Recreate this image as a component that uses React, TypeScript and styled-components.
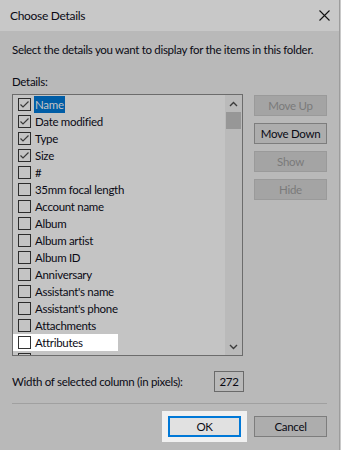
import React from 'react'
import styled, { createGlobalStyle } from 'styled-components'

const FONT = '"Segoe UI", Lato, "Liberation Sans", sans-serif'
const FONT_SIZE = '11.5px'
const TRACKING = '-0.3px'
const ROW_HEIGHT = 17

const GlobalStyle = createGlobalStyle`
  html, body {
    margin: 0;
    padding: 0;
    background: #c9c9c9;
  }
  body {
    font-family: ${FONT};
    font-size: ${FONT_SIZE};
    letter-spacing: ${TRACKING};
    color: #0a0a14;
    white-space: nowrap;
  }
`

const columns: Array<{ name: string, checked: boolean }> = [
  { name: 'Name', checked: true },
  { name: 'Date modified', checked: true },
  { name: 'Type', checked: true },
  { name: 'Size', checked: true },
  { name: '#', checked: false },
  { name: '35mm focal length', checked: false },
  { name: 'Account name', checked: false },
  { name: 'Album', checked: false },
  { name: 'Album artist', checked: false },
  { name: 'Album ID', checked: false },
  { name: 'Anniversary', checked: false },
  { name: "Assistant's name", checked: false },
  { name: "Assistant's phone", checked: false },
  { name: 'Attachments', checked: false },
  { name: 'Attributes', checked: false },
  { name: 'Audio format', checked: false }
]

const SELECTED = 'Name'
const SPOTLIGHT = 'Attributes'

const App = (): JSX.Element => {
  return (
    <>
      <GlobalStyle />
      <Dialog>
        <TitleBar>
          <Title>Choose Details</Title>
          <svg width="11" height="11" viewBox="0 0 11 11">
            <path d="M0.5 0.5 L10.5 10.5 M10.5 0.5 L0.5 10.5" stroke="#111" strokeWidth="1.1" />
          </svg>
        </TitleBar>
        <Body>
          <Intro>Select the details you want to display for the items in this folder.</Intro>
          <SectionLabel>Details:</SectionLabel>
          <MainRow>
            <ListBox>
              <Rows>
                {columns.map(col => (
                  <Row key={col.name} spotlight={col.name === SPOTLIGHT}>
                    <CheckBox spotlight={col.name === SPOTLIGHT}>
                      {col.checked && (
                        <svg width="11" height="11" viewBox="0 0 11 11">
                          <polyline points="1.5,5.5 4,8 9.5,2.5" fill="none" stroke="#3a3a3a" strokeWidth="1.2" />
                        </svg>
                      )}
                    </CheckBox>
                    <ItemLabel selected={col.name === SELECTED}>{col.name}</ItemLabel>
                  </Row>
                ))}
              </Rows>
              <ScrollBar>
                <ArrowButton>
                  <svg width="9" height="6" viewBox="0 0 9 6">
                    <polyline points="1,5 4.5,1.5 8,5" fill="none" stroke="#3c3c3c" strokeWidth="1.4" />
                  </svg>
                </ArrowButton>
                <Track>
                  <Thumb />
                </Track>
                <ArrowButton>
                  <svg width="9" height="6" viewBox="0 0 9 6">
                    <polyline points="1,1 4.5,4.5 8,1" fill="none" stroke="#3c3c3c" strokeWidth="1.4" />
                  </svg>
                </ArrowButton>
              </ScrollBar>
            </ListBox>
            <SideButtons>
              <Button disabled>Move Up</Button>
              <Button>Move Down</Button>
              <Button disabled>Show</Button>
              <Button disabled>Hide</Button>
            </SideButtons>
          </MainRow>
          <WidthRow>
            <span>Width of selected column (in pixels):</span>
            <WidthBox>272</WidthBox>
          </WidthRow>
          <Separator />
          <Footer>
            <Spotlight>
              <Button primary>OK</Button>
            </Spotlight>
            <Button>Cancel</Button>
          </Footer>
        </Body>
      </Dialog>
    </>
  )
}

export default App

const Dialog = styled.div`
  width: 339px;
  height: 450px;
  border-right: 1px solid #9c9c9c;
  background: #b9b9b9;
  display: flex;
  flex-direction: column;
  overflow: hidden;
`

const TitleBar = styled.div`
  height: 31px;
  flex: none;
  background: #c8c8c8;
  display: flex;
  align-items: center;
  justify-content: space-between;
  padding: 0 9px 0 10px;
  font-size: 12px;
  > svg {
    margin-top: -1px;
  }
`

const Title = styled.div`
  line-height: 16px;
`

const Body = styled.div`
  padding: 0 12px;
  display: flex;
  flex-direction: column;
`

const Intro = styled.div`
  margin-top: 11px;
  line-height: 16px;
`

const SectionLabel = styled.div`
  margin-top: 16px;
  line-height: 16px;
`

const MainRow = styled.div`
  margin-top: 4px;
  display: flex;
  align-items: flex-start;
`

const ListBox = styled.div`
  width: 231px;
  height: 260px;
  border: 1px solid #6c6c6c;
  background: #c4c4c4;
  display: flex;
  overflow: hidden;
`

const Rows = styled.div`
  flex: 1;
  padding-top: 1px;
  display: flex;
  flex-direction: column;
`

const Row = styled.div<{ spotlight: boolean }>`
  height: ${ROW_HEIGHT}px;
  flex: none;
  display: flex;
  align-items: center;
  width: ${({ spotlight }) => spotlight ? '100px' : 'auto'};
  padding-left: 5px;
  background: ${({ spotlight }) => spotlight ? '#ffffff' : 'transparent'};
`

const CheckBox = styled.div<{ spotlight: boolean }>`
  width: 11px;
  height: 11px;
  border: 1px solid ${({ spotlight }) => spotlight ? '#333' : '#2c2c2c'};
  background: ${({ spotlight }) => spotlight ? '#fff' : '#c4c4c4'};
  display: flex;
  align-items: center;
  justify-content: center;
  margin-right: 3px;
`

const ItemLabel = styled.span<{ selected: boolean }>`
  line-height: 17px;
  padding: 0 1px;
  background: ${({ selected }) => selected ? '#005da6' : 'transparent'};
  color: ${({ selected }) => selected ? '#c4c4c4' : '#0a0a14'};
`

const ScrollBar = styled.div`
  width: 17px;
  flex: none;
  background: #bababa;
  display: flex;
  flex-direction: column;
`

const ArrowButton = styled.div`
  height: 17px;
  flex: none;
  display: flex;
  align-items: center;
  justify-content: center;
`

const Track = styled.div`
  flex: 1;
  padding: 0 1px;
`

const Thumb = styled.div`
  height: 17px;
  background: #979797;
`

const SideButtons = styled.div`
  margin-left: 11px;
  display: flex;
  flex-direction: column;
  gap: 7px;
  margin-top: 1px;
`

const Button = styled.button<{ primary?: boolean }>`
  width: 73px;
  height: 21px;
  font-family: ${FONT};
  font-size: ${FONT_SIZE};
  letter-spacing: ${TRACKING};
  padding: 0;
  box-sizing: border-box;
  color: ${({ disabled }) => disabled ? '#7a7a7a' : '#0a0a14'};
  background: ${({ disabled, primary }) => primary ? '#e1e1e1' : disabled ? '#a4a4a4' : '#adadad'};
  border: ${({ primary }) => primary ? 2 : 1}px solid ${({ disabled, primary }) => primary ? '#0078d7' : disabled ? '#9a9a9a' : '#7d7d7d'};
`

const WidthRow = styled.div`
  margin-top: 15px;
  width: 232px;
  display: flex;
  align-items: center;
  justify-content: space-between;
`

const WidthBox = styled.div`
  width: 28px;
  height: 19px;
  border: 1px solid #6a6a6a;
  display: flex;
  align-items: center;
  justify-content: center;
`

const Separator = styled.div`
  margin-top: 11px;
  width: 315px;
  height: 1px;
  background: #a0a0a0;
`

const Footer = styled.div`
  margin-top: 7px;
  display: flex;
  justify-content: flex-end;
  align-items: center;
`

const Spotlight = styled.div`
  padding: 5px 6px;
  background: #f0f0f0;
  margin-right: 7px;
  display: flex;
`
